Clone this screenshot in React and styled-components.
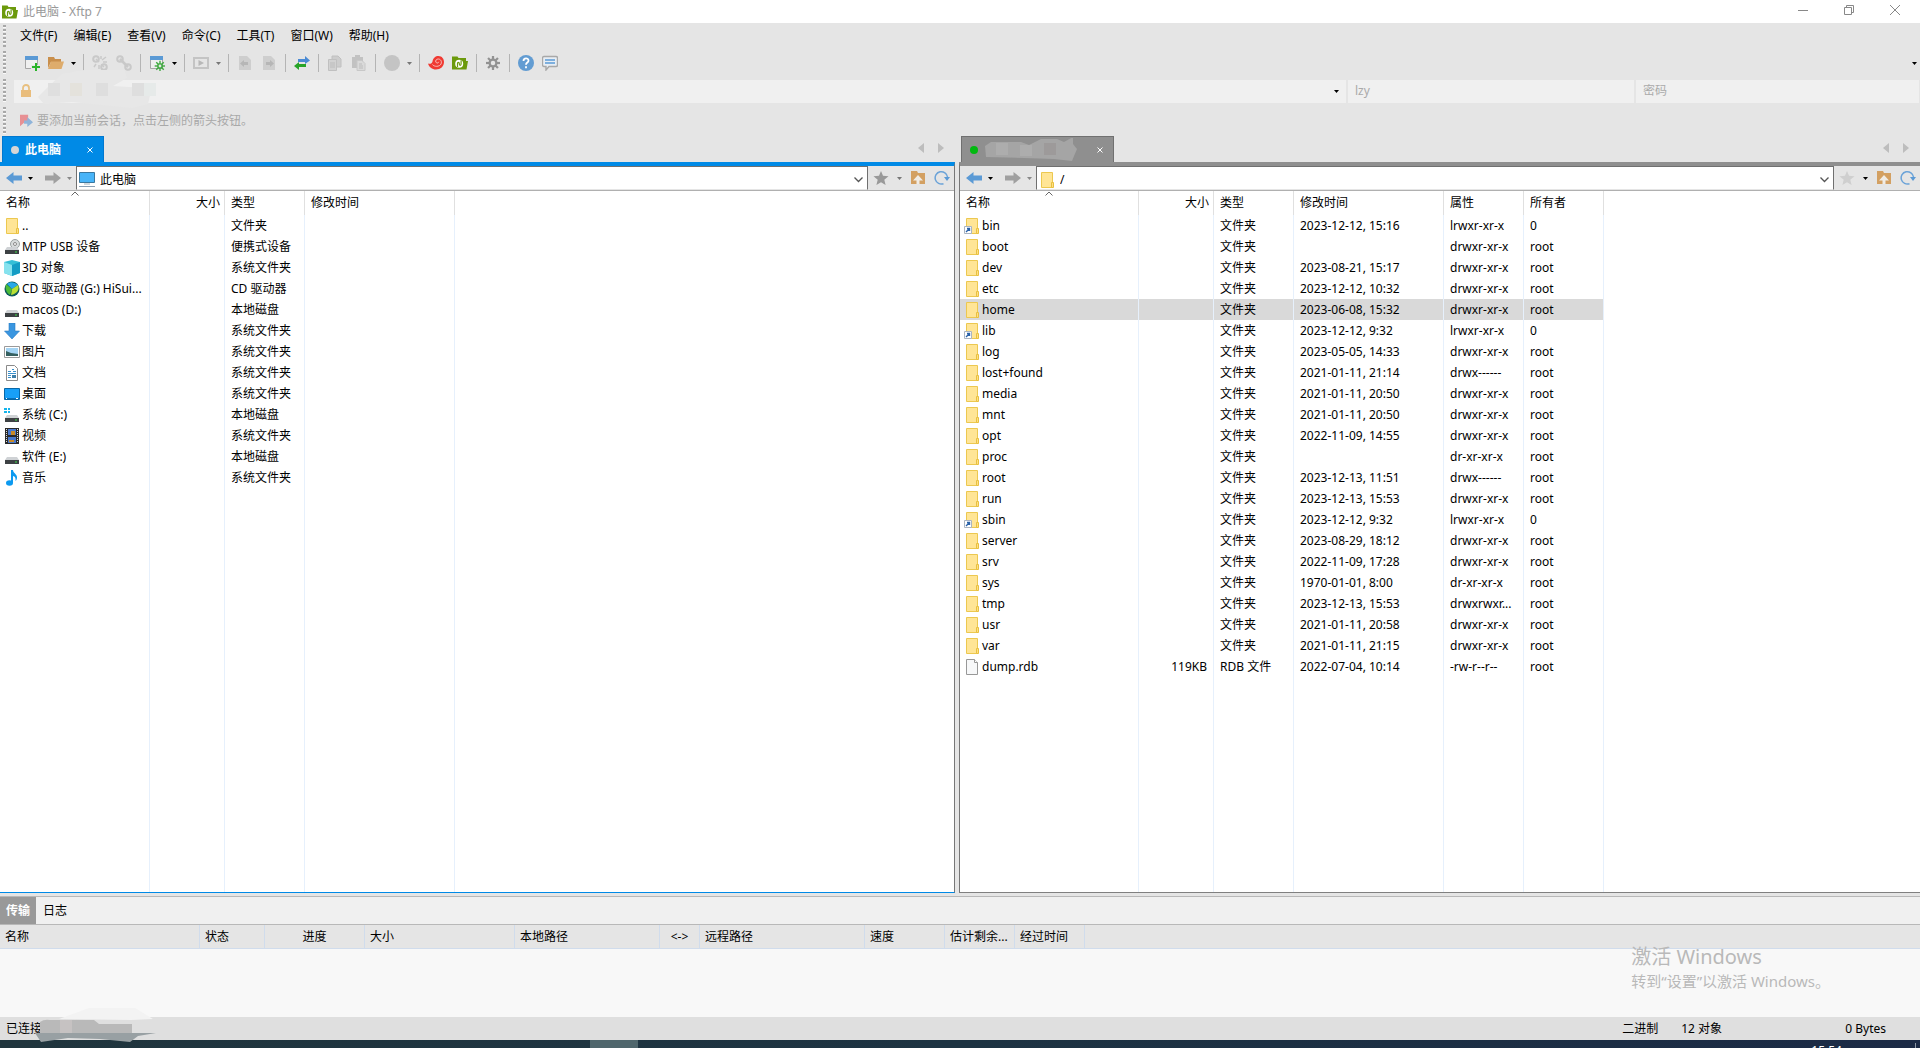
import { useState } from 'react'
import styled, { createGlobalStyle } from 'styled-components'

//#region Styled components
const GlobalStyle = createGlobalStyle`
  * { box-sizing: border-box; }
  body {
    margin: 0;
    overflow: hidden;
    font-family: 'Noto Sans', 'Noto Sans CJK SC', sans-serif;
    font-size: 12px;
    line-height: 16px;
    color: #000;
  }
  button, input {
    font: inherit;
    color: inherit;
    background: none;
    border: 0;
    padding: 0;
    margin: 0;
    outline: 0;
    border-radius: 0;
  }
  svg { display: block; flex: none; }
`
const Window = styled.div`
  display: flex;
  flex-direction: column;
  height: 100vh;
  min-height: 600px;
  background: #e5e5e5;
`
const TitleBar = styled.header`
  display: flex;
  align-items: center;
  height: 23px;
  flex: none;
  padding-right: 2px;
  background: #fff;
  color: #999;
`
const TitleText = styled.h1`
  flex: 1;
  margin: 0 0 0 5px;
  font-size: 12px;
  font-weight: 400;
`
const TitleIcon = styled.span`
  margin-left: 2px;
`
const WindowButton = styled.button`
  display: flex;
  align-items: center;
  justify-content: center;
  width: 46px;
  height: 20px;
  align-self: flex-start;
`
const Bar = styled.div`
  display: flex;
  align-items: center;
  flex: none;
  height: ${({ $height }) => $height}px;
  padding-left: 3px;
  position: relative;
`
const Grip = styled.i`
  width: 3px;
  height: calc(100% - 4px);
  margin-right: ${({ $space }) => $space}px;
  background: repeating-linear-gradient(to bottom, #a8a8a8 0 2px, #fafafa 2px 3px, transparent 3px 4px);
`
const Menu = styled.nav`
  display: flex;
  gap: 16px;
`
const ToolButton = styled.button`
  display: flex;
  align-items: center;
  justify-content: center;
  width: ${({ $caret }) => ($caret ? 11 : 24)}px;
  height: 24px;
`
const Separator = styled.i`
  width: 1px;
  height: 18px;
  margin: 0 4px;
  background: #b4b4b4;
`
const Spacer = styled.span`
  flex: 1;
`
const Field = styled.label`
  display: flex;
  align-items: center;
  height: 23px;
  flex: ${({ $width }) => ($width ? `0 0 ${$width}px` : 1)};
  margin-right: ${({ $last }) => ($last ? 1 : 2)}px;
  padding: 0 4px;
  background: #f0f0f0;
  color: #aaa;
  & input {
    flex: 1;
    min-width: 0;
    padding-left: 3px;
  }
  & input::placeholder {
    color: #aaa;
    opacity: 1;
  }
`
const Hint = styled.span`
  margin-left: 4px;
  color: #a9a9a9;
`
const Panes = styled.main`
  display: grid;
  grid-template-columns: minmax(0, 955fr) minmax(0, 961fr);
  gap: 4px;
  flex: 1;
  min-height: 0;
`
const Pane = styled.section`
  display: flex;
  flex-direction: column;
  min-height: 0;
`
const TabStrip = styled.div`
  display: flex;
  flex: none;
  height: 26px;
  padding-left: 2px;
`
const Tab = styled.div`
  display: flex;
  align-items: center;
  width: ${({ $width }) => $width}px;
  height: 26px;
  padding: 0 10px 0 8px;
  border: 1px solid ${({ $active }) => ($active ? '#0078d0' : '#707070')};
  border-bottom: 0;
  background: ${({ $active }) => ($active ? '#008ae6' : '#8f8f8f')};
  color: #fff;
  font-weight: 700;
`
const Dot = styled.i`
  width: 8px;
  height: 8px;
  margin-right: 6px;
  border-radius: 50%;
  background: ${({ $color }) => $color};
`
const TabTitle = styled.button`
  flex: 1;
  text-align: left;
`
const TabArrows = styled.div`
  display: flex;
  align-items: center;
  gap: 14px;
  height: 24px;
  margin-left: auto;
  padding-right: 11px;
`
const PaneBody = styled.div`
  display: flex;
  flex-direction: column;
  flex: 1;
  min-height: 0;
  border-top: 4px solid ${({ $active }) => ($active ? '#008ae6' : '#8f8f8f')};
  border-bottom: 1px solid ${({ $active }) => ($active ? '#008ae6' : '#808080')};
  border-left: ${({ $active }) => ($active ? 0 : 1)}px solid #777;
  border-right: ${({ $active }) => ($active ? 1 : 0)}px solid #777;
  background: #fff;
`
const NavBar = styled.div`
  display: flex;
  align-items: center;
  flex: none;
  height: 25px;
  border-bottom: 1px solid #b0b0b0;
  background: #e5e5e5;
`
const NavTools = styled.div`
  display: flex;
  align-items: center;
  width: 76px;
  padding: 0 6px;
  gap: 6px;
`
const NavActions = styled.div`
  display: flex;
  align-items: center;
  width: 86px;
  padding-left: 5px;
  gap: 8px;
`
const NavButton = styled.button`
  flex: none;
`
const PathBox = styled.label`
  display: flex;
  align-items: center;
  flex: 1;
  height: 24px;
  padding: 3px 4px 0 2px;
  border: 1px solid #707070;
  border-bottom-color: #e5e5e5;
  background: #fff;
  & input {
    flex: 1;
    min-width: 0;
    padding-left: 5px;
  }
`
const ListArea = styled.div`
  flex: 1;
  min-height: 0;
  overflow: hidden;
`
const FileTable = styled.table`
  height: 100%;
  table-layout: fixed;
  border-collapse: separate;
  border-spacing: 0;
  width: ${({ $width }) => $width}px;
`
const HeadCell = styled.th`
  position: relative;
  height: 24px;
  padding: 0 4px 0 6px;
  border-right: 1px solid #e0e0e0;
  font-weight: 400;
  text-align: ${({ $align }) => $align || 'left'};
`
const SortMark = styled.span`
  position: absolute;
  top: 0;
  left: 50%;
  margin-left: -4px;
`
const Row = styled.tr`
  height: 21px;
  background: ${({ $selected }) => ($selected ? '#d9d9d9' : 'transparent')};
`
const Cell = styled.td`
  height: ${({ $fill }) => ($fill ? 'auto' : '21px')};
  padding: 0 6px;
  border-right: 1px solid #e6f0fc;
  white-space: nowrap;
  overflow: hidden;
  text-overflow: ellipsis;
  text-align: ${({ $align }) => $align || 'left'};
`
const Name = styled.div`
  display: flex;
  align-items: center;
  gap: 2px;
  margin: 0 -4px 0 -2px;
`
const Transfer = styled.section`
  display: flex;
  flex-direction: column;
  flex: 0 0 121px;
  margin-top: 3px;
  border-top: 1px solid #b8b8b8;
  background: #f8f8f8;
  position: relative;
`
const TransferTabs = styled.div`
  display: flex;
  height: 28px;
  border-bottom: 1px solid #b8b8b8;
  background: #f0f0f0;
`
const TransferTab = styled.button`
  width: ${({ $active }) => ($active ? 36 : 38)}px;
  background: ${({ $active }) => ($active ? '#999' : 'transparent')};
  color: ${({ $active }) => ($active ? '#fff' : '#000')};
  font-weight: ${({ $active }) => ($active ? 700 : 400)};
`
const TransferHead = styled.div`
  height: 24px;
  border-bottom: 1px solid #d0dcec;
  background: #e5e5e5;
  overflow: hidden;
`
const TransferTable = styled.table`
  width: 1085px;
  table-layout: fixed;
  border-collapse: separate;
  border-spacing: 0;
`
const TransferCell = styled.th`
  height: 24px;
  padding: 0 5px;
  border-right: 1px solid #d0dcec;
  font-weight: 400;
  text-align: ${({ $align }) => $align || 'left'};
  white-space: nowrap;
`
const Watermark = styled.div`
  position: absolute;
  top: 46px;
  right: 90px;
  color: #b9b9b9;
  & strong {
    display: block;
    font-size: 20px;
    line-height: 28px;
    font-weight: 400;
  }
  & span {
    display: block;
    font-size: 15px;
    line-height: 20px;
  }
`
const StatusBar = styled.footer`
  display: flex;
  align-items: center;
  flex: 0 0 23px;
  padding: 0 34px 0 6px;
  background: #dfdfdf;
  position: relative;
`
const StatusItem = styled.span`
  width: ${({ $width }) => ($width ? `${$width}px` : 'auto')};
`
const Taskbar = styled.div`
  display: flex;
  flex: 0 0 8px;
  overflow: hidden;
  background: linear-gradient(to right, #20353d, #1d3342 50%, #1b2a45);
`
const TaskButton = styled.i`
  width: 48px;
  margin-left: 590px;
  background: #4f666c;
`
const Clock = styled.time`
  margin-left: auto;
  margin-top: 3px;
  padding-right: 73px;
  color: #fff;
  border-right: 1px solid #8c97a5;
  margin-right: 4px;
`
const Smudge = styled.svg`
  position: absolute;
  left: ${({ $left }) => $left}px;
  top: ${({ $top }) => $top}px;
`
// #endregion

//#region Icons
const Icon = ({ children, size = 16 }) => (
  <svg width={ size } height={ size } viewBox="0 0 16 16" fill="none" aria-hidden="true">{ children }</svg>
)

const Caret = ({ color = '#000' }) => (
  <svg width="5" height="3" viewBox="0 0 5 3"><path d="M0 0h5L2.5 3z" fill={ color } /></svg>
)

const XftpIcon = () => (
  <Icon>
    <path d="M0 1.500h5.500l1 1.500H14v3h2l-1.500 8.500H0z" fill="#6c9a0c" />
    <circle cx="7.200" cy="8.700" r="4" fill="#fff" />
    <path d="M5.500 12V8.500c0-1.600 1.800-1.600 1.800 0v.6c0 1.600 1.800 1.600 1.800 0V5.300" stroke="#6c9a0c" strokeWidth="1.200" />
  </Icon>
)

const ShellIcon = () => (
  <Icon>
    <path d="M0 8.500c2 .8 4 .2 4.500-2C5 3 7.500 1 10.500 1 14 1 16 4 16 7c0 4.500-3.500 7.500-8 7.500C4 14.500 1 12 0 8.500z" fill="#f03a32" />
    <path d="M4.500 9.500c1.500 2.500 7 2.500 8.500-.5 1.200-2.600-.5-5-2.700-5C8.500 4 7.200 5.500 7.800 7c.6 1.400 2.700 1.400 2.900-.2" stroke="#f6c9c5" strokeWidth=".9" />
  </Icon>
)

const windowShape = (
  <>
    <path d="M1.500 2.500h12v11h-12z" fill="#efefef" stroke="#a5a5a5" />
    <path d="M1 1h13v4H1z" fill="#5b9ad5" />
  </>
)

const NewSessionIcon = () => (
  <Icon>
    { windowShape }
    <path d="M7 10h9v6H7z" fill="#e5e5e5" />
    <path d="M12 8v8M8 12h8" stroke="#28b428" strokeWidth="2" />
  </Icon>
)

const OpenIcon = () => (
  <Icon>
    <path d="M0 2h6l1 2h6v3H3L0 13z" fill="#c98f4c" />
    <path d="M3 6.500h13L13.500 14H0z" fill="#deac6c" />
  </Icon>
)

const LinkIcon = ({ broken }) => (
  <Icon>
    <g stroke="#c9c9c9" strokeWidth="2">
      <circle cx="4" cy="4" r="2.800" />
      <circle cx="12" cy="12" r="2.800" />
      { broken
        ? <path d="M4 4l3 3M9.500 9.500L12 12M10 5l4-3M11 7h4M9 4V1M4 9l-2 3M7 10v4" strokeWidth="1.500" />
        : <path d="M4 4l8 8" strokeWidth="2.500" /> }
    </g>
  </Icon>
)

const Gear = ({ color, cx = 8, cy = 8, r = 4.500, hole = '#e5e5e5' }) => (
  <g stroke={ color }>
    { [0, 45, 90, 135].map((angle) => (
      <path
        key={ angle }
        d={ `M${cx} ${cy - r - 2.500}V${cy + r + 2.500}` }
        strokeWidth={ r / 2 }
        transform={ `rotate(${angle} ${cx} ${cy})` }
      />
    )) }
    <circle cx={ cx } cy={ cy } r={ r } fill={ color } stroke="none" />
    <circle cx={ cx } cy={ cy } r={ r / 2 } fill={ hole } stroke="none" />
  </g>
)

const PropertiesIcon = () => (
  <Icon>
    { windowShape }
    <Gear color="#3faa3f" cx={ 11 } cy={ 11 } r={ 2.800 } />
  </Icon>
)

const PlayIcon = () => (
  <Icon>
    <path d="M1 3h14v10H1z" stroke="#c4c4c4" strokeWidth="2" />
    <path d="M5.500 5v6L11 8z" fill="#b8b8b8" />
  </Icon>
)

const DocArrowIcon = ({ right }) => (
  <Icon>
    <path d="M2 1h8l4 4v10H2z" fill="#cecece" />
    <path d={ right ? 'M13 8.500L9 5v2H5v3h4v2z' : 'M3 8.500L7 5v2h4v3H7v2z' } fill="#b6b6b6" />
  </Icon>
)

const SyncIcon = () => (
  <Icon>
    <path d="M4 4h7V1l5 4.500L11 9V7H4z" fill="#4a8ad4" />
    <path d="M12 9H5V7l-5 4 5 4v-3h7z" fill="#28a428" />
  </Icon>
)

const CopyIcon = () => (
  <Icon>
    <path d="M5 1h6l3 3v8H5z" fill="#cdcdcd" stroke="#c0c0c0" />
    <path d="M1.500 4.500h8v11h-8z" fill="#d2d2d2" stroke="#c0c0c0" />
    <path d="M3 8h5M3 10h5M3 12h5" stroke="#bcbcbc" />
  </Icon>
)

const PasteIcon = () => (
  <Icon>
    <path d="M1 2h11v11H1zM4 0h5v3H4z" fill="#c2c2c2" />
    <path d="M6 5.500h5l3 3v7H6z" fill="#dadada" stroke="#c8c8c8" />
    <path d="M8 9h3M8 11h4M8 13h4" stroke="#bcbcbc" />
  </Icon>
)

const StopIcon = () => <Icon><circle cx="8" cy="8" r="8" fill="#c4c4c4" /></Icon>

const HelpIcon = () => (
  <Icon>
    <circle cx="8" cy="8" r="8" fill="#629cd2" />
    <path d="M5.500 6c0-3.500 5-3.500 5-.3 0 2-2.500 1.800-2.500 4M8 11.200v2" stroke="#fff" strokeWidth="1.800" />
  </Icon>
)

const ChatIcon = () => (
  <Icon>
    <path d="M2 1.500h12q1.500 0 1.500 1.500v7q0 1.500-1.500 1.500H7L4 15v-3.500H2Q.5 11.500.5 10V3q0-1.500 1.500-1.500z" fill="#e8eef4" stroke="#a8a8a8" strokeWidth="1.400" />
    <path d="M3 5h10M3 8h10" stroke="#5b9ad5" strokeWidth="1.600" />
  </Icon>
)

const LockIcon = () => (
  <Icon>
    <path d="M5 8V5c0-4 6-4 6 0v3" stroke="#e8c080" strokeWidth="1.800" />
    <path d="M3 7h10v7H3z" fill="#e9bd7c" />
  </Icon>
)

const BookmarkIcon = () => (
  <Icon size={ 13 }>
    <path d="M0 1h10v8H7l-7 6z" fill="#e79094" />
    <path d="M5 8h4V4l7 6-7 6v-4H5z" fill="#8fb4da" />
  </Icon>
)

const ArrowIcon = ({ right }) => (
  <Icon>
    <path
      d={ right ? 'M0 5.500h8.500V2L16 8l-7.500 6v-3.500H0z' : 'M16 5.500H7.500V2L0 8l7.500 6v-3.500H16z' }
      fill={ right ? '#a0a0a0' : '#5b9ad5' }
    />
  </Icon>
)

const StarIcon = ({ color }) => (
  <Icon><path d="M8 1l2 4.800 5.500.5-4.200 3.500 1.300 5.200L8 12.200 3.400 15l1.300-5.200L.5 6.300 6 5.800z" fill={ color } /></Icon>
)

const UpFolderIcon = () => (
  <Icon>
    <path d="M1 1h6l1 2h7v11H1z" fill="#d3a062" />
    <path d="M8 5l5 5.500h-3.500V14h-3v-3.500H3z" fill="#f0ece6" />
  </Icon>
)

const RefreshIcon = () => (
  <Icon>
    <path d="M9.500 13.700A6.200 6.200 0 1 1 13.500 7" stroke="#6ba3d8" strokeWidth="1.500" />
    <path d="M10 7h6l-3 4z" fill="#5b9ad5" />
  </Icon>
)

const ChevronIcon = () => (
  <svg width="9" height="6" viewBox="0 0 9 6" fill="none"><path d="M.5.5l4 4 4-4" stroke="#555" strokeWidth="1.300" /></svg>
)

const SortIcon = () => (
  <svg width="8" height="5" viewBox="0 0 8 5" fill="none"><path d="M.5 4.500L4 1l3.500 3.500" stroke="#666" /></svg>
)

const CloseMark = () => (
  <svg width="6" height="6" viewBox="0 0 6 6"><path d="M.5.5l5 5M5.500.5l-5 5" stroke="#fff" /></svg>
)

const drive = (
  <>
    <path d="M3 8h10l2 3H1z" fill="#cfd2d5" />
    <path d="M1 11h14v4H1z" fill="#3d4144" />
    <path d="M11 12.500h2v1h-2z" fill="#3ee048" />
  </>
)

const folder = (
  <>
    <path d="M2.500.5h11v15h-11z" fill="#ffe596" stroke="#ecc850" />
    <path d="M12.500 10.500h2v5h-2z" fill="#ffe084" stroke="#e8c040" />
  </>
)

const fileIcons = {
  folder,
  link: (
    <>
      { folder }
      <path d="M.5 8.500h7v7h-7z" fill="#fff" stroke="#aab4c0" />
      <path d="M2 14l3-3M3 10.500h2.500V13" stroke="#2a62a8" strokeWidth="1.400" />
    </>
  ),
  file: (
    <>
      <path d="M2.500.5h8l3 3v12h-11z" fill="#f7f8f9" stroke="#989898" />
      <path d="M10.500.5v3h3" fill="#fff" stroke="#989898" />
    </>
  ),
  usb: (
    <>
      <circle cx="11" cy="5" r="4.500" fill="#d8dcdc" stroke="#9aa0a0" />
      <circle cx="11" cy="5" r="1.500" fill="#fff" stroke="#888" />
      { drive }
    </>
  ),
  cube: (
    <>
      <path d="M8 0l8 2v11l-8 3-8-3V2z" fill="#35bfd6" />
      <path d="M0 2l8 3v11l-8-3z" fill="#86e2ee" />
      <path d="M16 2L8 5v11l8-3z" fill="#149cc4" />
    </>
  ),
  cd: (
    <>
      <circle cx="8" cy="8" r="7.500" fill="#0d5a5c" />
      <path d="M2 3l6 5-2 6C2 12 1 7 2 3z" fill="#4cbc38" />
      <path d="M3 3c3-3 8-2 11 1L8 8z" fill="#28a8e8" />
      <path d="M14 4c2 4-1 9-7 10l1-6z" fill="#b9e034" />
    </>
  ),
  drive,
  download: <path d="M5 0h6v8h4.500L8 16 .5 8H5z" fill="#3a96e0" stroke="#2a7cc4" strokeWidth=".6" />,
  picture: (
    <>
      <path d="M.5 2.500h15v11H.5z" fill="#fff" stroke="#9a9a9a" />
      <path d="M2 4h12v8H2z" fill="#a4d4f4" />
      <path d="M2 7l5 2 7 1v2H2z" fill="#356060" />
    </>
  ),
  document: (
    <>
      <path d="M2.500.5h8l3 3v12h-11z" fill="#fff" stroke="#8a8a8a" />
      <path d="M4 6.500h3M8 4.500h2M9 6.500h3M4 8.500h8M4 10.500h3M4 12.500h3" stroke="#3a90cc" />
      <path d="M8 10h4v3H8z" fill="#3f7fa8" />
    </>
  ),
  desktop: (
    <>
      <path d="M.5 2.500h15v11H.5z" fill="#18a0f8" stroke="#0868a8" />
      <path d="M1 12.500h14" stroke="#0a70b8" />
      <path d="M2 12.500h1M12 12.500h2" stroke="#fff" />
    </>
  ),
  system: (
    <>
      <path d="M0 1h3v2H0zM4 1h2v2H4zM0 4h3v2H0zM4 4h2v2H4z" fill="#14b4ec" />
      { drive }
    </>
  ),
  video: (
    <>
      <path d="M1 0h14v16H1z" fill="#2a2a2a" />
      <path d="M4 1h8v6H4zM4 9h8v6H4z" fill="#4878cc" />
      <path d="M7 3h4v4H7zM5 12h5v2H5z" fill="#c88a28" />
      <path d="M2.500 1v14M13.500 1v14" stroke="#ddd" strokeDasharray="1 1" />
    </>
  ),
  music: (
    <>
      <ellipse cx="5.500" cy="13" rx="3.500" ry="2.700" fill="#0c9af0" />
      <path d="M7 0h2c0 3 4 4 4 7.500 0 1.500-.5 2.500-1.500 3.500C12 8 11 6.500 9 6v7H7z" fill="#0c9af0" />
    </>
  ),
  computer: (
    <>
      <path d="M.5.500h15v10H.5z" fill="#48b4f8" stroke="#3a78a0" />
      <path d="M5 12h6" stroke="#a0b0bc" />
      <path d="M0 14.500h16" stroke="#8aa0b4" />
    </>
  )
}
// #endregion

const menus = ['文件(F)', '编辑(E)', '查看(V)', '命令(C)', '工具(T)', '窗口(W)', '帮助(H)']

const tools = [
  ['新建会话', <NewSessionIcon />], ['打开', <OpenIcon />], 'caret', 'sep',
  ['断开', <LinkIcon broken />], ['重新连接', <LinkIcon />], 'sep',
  ['属性', <PropertiesIcon />], 'caret', 'sep',
  ['运行', <PlayIcon />], 'caretOff', 'sep',
  ['向左传输', <DocArrowIcon />], ['向右传输', <DocArrowIcon right />], 'sep',
  ['同步', <SyncIcon />], 'sep',
  ['复制', <CopyIcon />], ['粘贴', <PasteIcon />], 'sep',
  ['停止', <StopIcon />], 'caretOff', 'sep',
  ['Xshell', <ShellIcon />], ['Xftp', <XftpIcon />], 'sep',
  ['选项', <Icon><Gear color="#929292" /></Icon>], 'sep',
  ['帮助', <HelpIcon />], ['反馈', <ChatIcon />]
]

const localColumns = [['名称', 150], ['大小', 75, 'right'], ['类型', 80], ['修改时间', 150]]
const remoteColumns = [['名称', 179], ['大小', 75, 'right'], ['类型', 80], ['修改时间', 150], ['属性', 80], ['所有者', 80]]

const localFiles = [
  ['folder', '..', '', '文件夹', ''],
  ['usb', 'MTP USB 设备', '', '便携式设备', ''],
  ['cube', '3D 对象', '', '系统文件夹', ''],
  ['cd', 'CD 驱动器 (G:) HiSui...', '', 'CD 驱动器', ''],
  ['drive', 'macos (D:)', '', '本地磁盘', ''],
  ['download', '下载', '', '系统文件夹', ''],
  ['picture', '图片', '', '系统文件夹', ''],
  ['document', '文档', '', '系统文件夹', ''],
  ['desktop', '桌面', '', '系统文件夹', ''],
  ['system', '系统 (C:)', '', '本地磁盘', ''],
  ['video', '视频', '', '系统文件夹', ''],
  ['drive', '软件 (E:)', '', '本地磁盘', ''],
  ['music', '音乐', '', '系统文件夹', '']
]

const remoteFiles = [
  ['link', 'bin', '', '文件夹', '2023-12-12, 15:16', 'lrwxr-xr-x', '0'],
  ['folder', 'boot', '', '文件夹', '', 'drwxr-xr-x', 'root'],
  ['folder', 'dev', '', '文件夹', '2023-08-21, 15:17', 'drwxr-xr-x', 'root'],
  ['folder', 'etc', '', '文件夹', '2023-12-12, 10:32', 'drwxr-xr-x', 'root'],
  ['folder', 'home', '', '文件夹', '2023-06-08, 15:32', 'drwxr-xr-x', 'root'],
  ['link', 'lib', '', '文件夹', '2023-12-12, 9:32', 'lrwxr-xr-x', '0'],
  ['folder', 'log', '', '文件夹', '2023-05-05, 14:33', 'drwxr-xr-x', 'root'],
  ['folder', 'lost+found', '', '文件夹', '2021-01-11, 21:14', 'drwx------', 'root'],
  ['folder', 'media', '', '文件夹', '2021-01-11, 20:50', 'drwxr-xr-x', 'root'],
  ['folder', 'mnt', '', '文件夹', '2021-01-11, 20:50', 'drwxr-xr-x', 'root'],
  ['folder', 'opt', '', '文件夹', '2022-11-09, 14:55', 'drwxr-xr-x', 'root'],
  ['folder', 'proc', '', '文件夹', '', 'dr-xr-xr-x', 'root'],
  ['folder', 'root', '', '文件夹', '2023-12-13, 11:51', 'drwx------', 'root'],
  ['folder', 'run', '', '文件夹', '2023-12-13, 15:53', 'drwxr-xr-x', 'root'],
  ['link', 'sbin', '', '文件夹', '2023-12-12, 9:32', 'lrwxr-xr-x', '0'],
  ['folder', 'server', '', '文件夹', '2023-08-29, 18:12', 'drwxr-xr-x', 'root'],
  ['folder', 'srv', '', '文件夹', '2022-11-09, 17:28', 'drwxr-xr-x', 'root'],
  ['folder', 'sys', '', '文件夹', '1970-01-01, 8:00', 'dr-xr-xr-x', 'root'],
  ['folder', 'tmp', '', '文件夹', '2023-12-13, 15:53', 'drwxrwxr...', 'root'],
  ['folder', 'usr', '', '文件夹', '2021-01-11, 20:58', 'drwxr-xr-x', 'root'],
  ['folder', 'var', '', '文件夹', '2021-01-11, 21:15', 'drwxr-xr-x', 'root'],
  ['file', 'dump.rdb', '119KB', 'RDB 文件', '2022-07-04, 10:14', '-rw-r--r--', 'root']
]

const transferColumns = [
  ['名称', 200], ['状态', 65], ['进度', 100, 'center'], ['大小', 150], ['本地路径', 145],
  ['<->', 40, 'center'], ['远程路径', 165], ['速度', 80], ['估计剩余...', 70], ['经过时间', 70]
]

const Columns = ({ columns }) => (
  <colgroup>
    { columns.map(([label, width]) => <col key={ label } style={ { width } } />) }
  </colgroup>
)

const FileList = ({ columns, files, selected, setSelected }) => (
  <ListArea>
    <FileTable $width={ columns.reduce((sum, column) => sum + column[1], 0) }>
      <Columns columns={ columns } />
      <thead>
        <tr>
          { columns.map(([label, , align], i) => (
            <HeadCell key={ label } $align={ align }>
              { i === 0 && <SortMark><SortIcon /></SortMark> }
              { label }
            </HeadCell>
          )) }
        </tr>
      </thead>
      <tbody>
        { files.map(([icon, name, ...cells]) => (
          <Row key={ name } $selected={ selected === name } onClick={ () => setSelected(name) }>
            <Cell><Name><Icon>{ fileIcons[icon] }</Icon>{ name }</Name></Cell>
            { cells.map((cell, i) => <Cell key={ i } $align={ columns[i + 1][2] }>{ cell }</Cell>) }
          </Row>
        )) }
        <tr>{ columns.map(([label]) => <Cell key={ label } $fill />) }</tr>
      </tbody>
    </FileTable>
  </ListArea>
)

const FilePane = function ({ active, title, tabWidth, dot, path, pathIcon, starColor, starCaret, children, ...list }) {
  const [value, setValue] = useState(path)

  return (
    <Pane>
      <TabStrip>
        <Tab $active={ active } $width={ tabWidth }>
          <Dot $color={ dot } />
          <TabTitle aria-label={ title || '远程会话' }>{ title || children }</TabTitle>
          <NavButton aria-label="关闭标签"><CloseMark /></NavButton>
        </Tab>
        <TabArrows>
          <NavButton aria-label="上一个标签">
            <svg width="6" height="10" viewBox="0 0 6 10"><path d="M6 0v10L0 5z" fill="#bdbdbd" /></svg>
          </NavButton>
          <NavButton aria-label="下一个标签">
            <svg width="6" height="10" viewBox="0 0 6 10"><path d="M0 0v10l6-5z" fill="#bdbdbd" /></svg>
          </NavButton>
        </TabArrows>
      </TabStrip>
      <PaneBody $active={ active }>
        <NavBar>
          <NavTools>
            <NavButton aria-label="后退"><ArrowIcon /></NavButton>
            <NavButton aria-label="后退历史"><Caret /></NavButton>
            <Spacer />
            <NavButton aria-label="前进"><ArrowIcon right /></NavButton>
            <NavButton aria-label="前进历史"><Caret color="#888" /></NavButton>
          </NavTools>
          <PathBox>
            <Icon>{ fileIcons[pathIcon] }</Icon>
            <input aria-label="路径" value={ value } onChange={ (e) => setValue(e.target.value) } />
            <ChevronIcon />
          </PathBox>
          <NavActions>
            <NavButton aria-label="收藏"><StarIcon color={ starColor } /></NavButton>
            <NavButton aria-label="收藏列表"><Caret color={ starCaret } /></NavButton>
            <NavButton aria-label="上级目录"><UpFolderIcon /></NavButton>
            <NavButton aria-label="刷新"><RefreshIcon /></NavButton>
          </NavActions>
        </NavBar>
        <FileList { ...list } />
      </PaneBody>
    </Pane>
  )
}

const Tools = () => tools.map((tool, i) => {
  if (tool === 'sep') return <Separator key={ i } />
  if (tool === 'caret' || tool === 'caretOff') {
    return (
      <ToolButton key={ i } $caret aria-label="更多">
        <Caret color={ tool === 'caret' ? '#000' : '#777' } />
      </ToolButton>
    )
  }
  return <ToolButton key={ i } aria-label={ tool[0] }>{ tool[1] }</ToolButton>
})

const App = function () {
  const [localSelected, setLocalSelected] = useState(null)
  const [remoteSelected, setRemoteSelected] = useState('home')
  const [host, setHost] = useState('')
  const [user, setUser] = useState('lzy')

  return (
    <Window>
      <GlobalStyle />
      <TitleBar>
        <TitleIcon><XftpIcon /></TitleIcon>
        <TitleText>此电脑 - Xftp 7</TitleText>
        <WindowButton aria-label="最小化">
          <svg width="10" height="10" viewBox="0 0 10 10"><path d="M0 5.500h10" stroke="#888" /></svg>
        </WindowButton>
        <WindowButton aria-label="还原">
          <svg width="10" height="10" viewBox="0 0 10 10" fill="none"><path d="M.5 2.500h7v7h-7zM2.500 2.500v-2h7v7h-2" stroke="#888" /></svg>
        </WindowButton>
        <WindowButton aria-label="关闭">
          <svg width="10" height="10" viewBox="0 0 10 10"><path d="M0 0l10 10M10 0L0 10" stroke="#888" /></svg>
        </WindowButton>
      </TitleBar>

      <Bar $height={ 26 }>
        <Grip $space={ 14 } />
        <Menu>
          { menus.map((menu) => <button key={ menu }>{ menu }</button>) }
        </Menu>
      </Bar>
      <Bar $height={ 28 }>
        <Grip $space={ 14 } />
        <Tools />
        <Spacer />
        <ToolButton $caret aria-label="工具栏选项"><Caret /></ToolButton>
      </Bar>
      <Bar $height={ 28 }>
        <Grip $space={ 8 } />
        <Field>
          <LockIcon />
          <input aria-label="主机" value={ host } onChange={ (e) => setHost(e.target.value) } />
          <ToolButton $caret aria-label="主机列表"><Caret /></ToolButton>
        </Field>
        <Field $width={ 286 }>
          <input aria-label="用户名" value={ user } onChange={ (e) => setUser(e.target.value) } />
        </Field>
        <Field $width={ 283 } $last>
          <input type="password" aria-label="密码" placeholder="密码" />
        </Field>
        <Smudge width="150" height="40" $left={ 36 } $top={ -7 }>
          <path d="M2 27l10-10 14-13 22-4 40-1 3 9-14 8 32 2 6 3-3 13-16 4-60-6-28 2z" fill="#e7e7e7" />
          <path d="M12 13h12v13H12z" fill="#dfdfdf" />
          <path d="M34 13h12v13H34z" fill="#e4e2dc" />
          <path d="M60 13h12v13H60z" fill="#dedede" />
          <path d="M96 13h12v13H96z" fill="#dedede" />
          <path d="M108 13h12v13h-12z" fill="#e6eae9" />
        </Smudge>
      </Bar>
      <Bar $height={ 31 }>
        <Grip $space={ 14 } />
        <BookmarkIcon />
        <Hint>要添加当前会话，点击左侧的箭头按钮。</Hint>
      </Bar>

      <Panes>
        <FilePane
          active
          title="此电脑"
          tabWidth={ 102 }
          dot="#d6d6d6"
          path="此电脑"
          pathIcon="computer"
          starColor="#999"
          starCaret="#777"
          columns={ localColumns }
          files={ localFiles }
          selected={ localSelected }
          setSelected={ setLocalSelected }
        />
        <FilePane
          tabWidth={ 153 }
          dot="#00b90f"
          path="/"
          pathIcon="folder"
          starColor="#cfcfcf"
          starCaret="#000"
          columns={ remoteColumns }
          files={ remoteFiles }
          selected={ remoteSelected }
          setSelected={ setRemoteSelected }
        >
          <svg width="94" height="24" viewBox="0 0 94 24">
            <path d="M1 8l6-4h30l8 3 12-6h16l7 3 9-5v7l4 5-3 7-2 5-18-2-30-1-38-1z" fill="#a5a5a5" />
            <path d="M12 5h12v12H12zM36 7h12v11H36z" fill="#adadad" />
            <path d="M60 5h12v12H60z" fill="#9d9a9a" />
          </svg>
        </FilePane>
      </Panes>

      <Transfer>
        <TransferTabs>
          <TransferTab $active>传输</TransferTab>
          <TransferTab>日志</TransferTab>
        </TransferTabs>
        <TransferHead>
          <TransferTable>
            <Columns columns={ transferColumns } />
            <thead>
              <tr>
                { transferColumns.map(([label, , align]) => (
                  <TransferCell key={ label } $align={ align }>{ label }</TransferCell>
                )) }
              </tr>
            </thead>
          </TransferTable>
        </TransferHead>
        <Watermark>
          <strong>激活 Windows</strong>
          <span>转到“设置”以激活 Windows。</span>
        </Watermark>
      </Transfer>

      <StatusBar>
        <StatusItem>已连接</StatusItem>
        <Spacer />
        <StatusItem $width={ 59 }>二进制</StatusItem>
        <StatusItem $width={ 164 }>12 对象</StatusItem>
        <StatusItem>0 Bytes</StatusItem>
        <Smudge width="126" height="36" $left={ 33 } $top={ -9 }>
          <path d="M26 11L56 0h46l18 11-22 1z" fill="#f3f3f3" />
          <path d="M7 14q4-3 10-2h44l5 4h33v9H7z" fill="#b9b9b9" />
          <path d="M27 12h12v13H27z" fill="#c6c2c2" />
          <path d="M2 25h121l-18 3-8 6-30-3-32-1-27 4z" fill="#98a0a3" />
        </Smudge>
      </StatusBar>
      <Taskbar>
        <TaskButton />
        <Clock>15:54</Clock>
      </Taskbar>
    </Window>
  )
}

export default App
